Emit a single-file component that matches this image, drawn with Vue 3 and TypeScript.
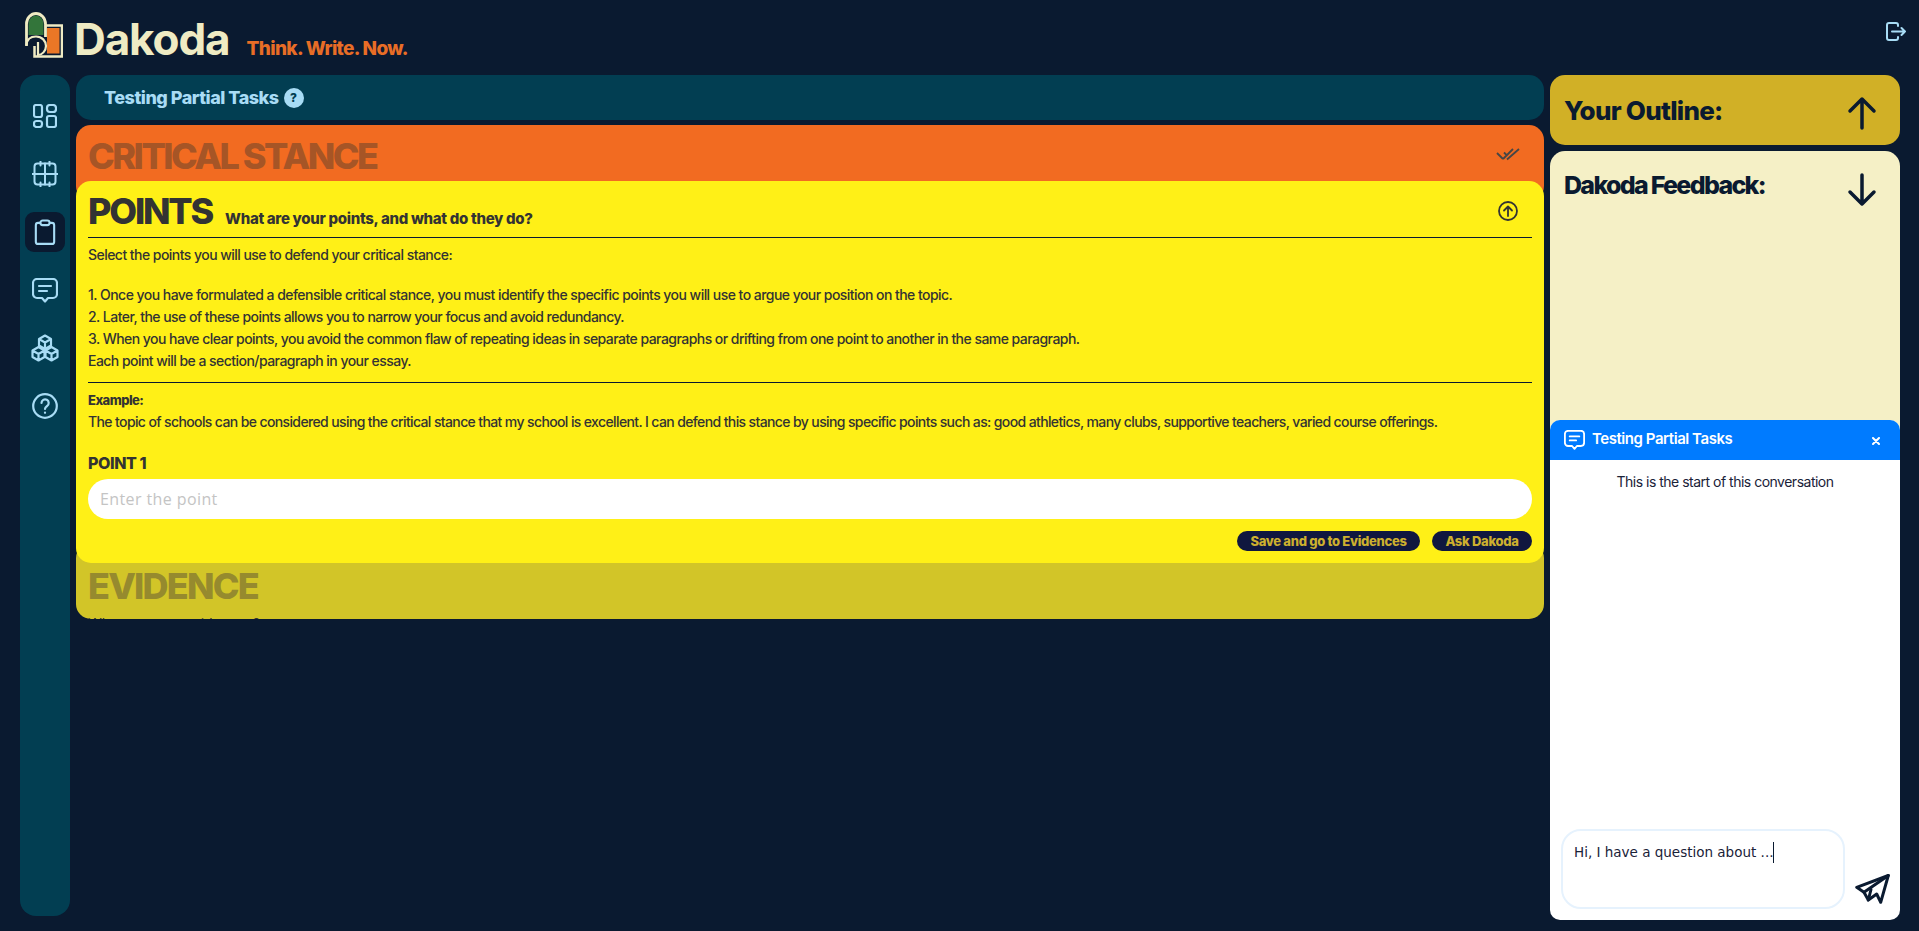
<script setup lang="ts">
const bodyLines: string[] = [
  '1. Once you have formulated a defensible critical stance, you must identify the specific points you will use to argue your position on the topic.',
  '2. Later, the use of these points allows you to narrow your focus and avoid redundancy.',
  '3. When you have clear points, you avoid the common flaw of repeating ideas in separate paragraphs or drifting from one point to another in the same paragraph.',
  'Each point will be a section/paragraph in your essay.',
]
</script>

<template>
  <div class="app">
    <header class="top">
      <div class="brand">
        <svg class="logo" viewBox="0 0 38 46" width="38" height="46" fill="none">
          <path d="M20 13.500H37V44.500H9.500V34" fill="#0a1a30" stroke="#efebc3" stroke-width="2.500"/>
          <rect x="22" y="16" width="12.500" height="25.500" fill="#ea7726"/>
          <path d="M1.500 34V12C1.500 6 6 1.500 11 1.500S20.500 6 20.500 12V25" fill="#0a1a30" stroke="#efebc3" stroke-width="2.800" stroke-linejoin="round"/>
          <path d="M3.500 23V12C3.500 7.500 7 3.500 11 3.500S18.500 7.500 18.500 12V23Z" fill="#33753a"/>
          <path d="M1.500 33C2 27 6 24.500 11 24.500C17 24.500 21 29 21 34C21 39 17 43 13 43V30" stroke="#efebc3" stroke-width="2.200"/>
        </svg>
        <span class="wordmark">Dakoda</span>
        <span class="tagline">Think. Write. Now.</span>
      </div>
      <svg class="logout" viewBox="0 0 20 19" width="20" height="19" fill="none" stroke="#a8dcf5" stroke-width="2" stroke-linecap="round" stroke-linejoin="round">
        <path d="M12 4V3a2 2 0 0 0-2-2H3a2 2 0 0 0-2 2v13a2 2 0 0 0 2 2h7a2 2 0 0 0 2-2v-1"/>
        <path d="M6 9.500h13M15.500 6l3.500 3.500-3.500 3.500"/>
      </svg>
    </header>

    <div class="body">
      <nav class="side">
        <a class="nav-item">
          <svg viewBox="0 0 24 24" width="24" height="24" fill="none" stroke="#a8dcf5" stroke-width="2.200">
            <rect x="1" y="1" width="8" height="12" rx="2"/>
            <rect x="14" y="1" width="9" height="7" rx="3"/>
            <rect x="14" y="12" width="9" height="11" rx="2"/>
            <rect x="1" y="17" width="8" height="6" rx="2.500"/>
          </svg>
        </a>
        <a class="nav-item">
          <svg viewBox="0 0 26 26" width="26" height="26" fill="none" stroke="#a8dcf5" stroke-width="2" stroke-linecap="round">
            <rect x="2.500" y="2.500" width="21" height="21" rx="3"/>
            <path d="M13 2.500v21M.5 13h25M8.500 .5v4M17.500 .5v4M8.500 21.500v4M17.500 21.500v4"/>
          </svg>
        </a>
        <a class="nav-item active">
          <svg viewBox="0 0 24 28" width="22" height="26" fill="none" stroke="#a8dcf5" stroke-width="2.300" stroke-linejoin="round">
            <path d="M7 4H4.500A2.500 2.500 0 0 0 2 6.500v18A2.500 2.500 0 0 0 4.500 27h15a2.500 2.500 0 0 0 2.500-2.500v-18A2.500 2.500 0 0 0 19.500 4H17"/>
            <rect x="7" y="1.500" width="10" height="5" rx="2.500"/>
          </svg>
        </a>
        <a class="nav-item">
          <svg viewBox="0 0 26 25" width="26" height="25" fill="none" stroke="#a8dcf5" stroke-width="2.200" stroke-linejoin="round" stroke-linecap="round">
            <path d="M5 1h16a4 4 0 0 1 4 4v11a4 4 0 0 1-4 4h-5l-3 3.500L10 20H5a4 4 0 0 1-4-4V5a4 4 0 0 1 4-4Z"/>
            <path d="M7 8h12M7 13h8"/>
          </svg>
        </a>
        <a class="nav-item">
          <svg viewBox="0 0 28 28" width="28" height="28" fill="none" stroke="#a8dcf5" stroke-width="2.200" stroke-linejoin="round">
            <path d="M14 1.500l6 3.500v6.500l-6 3.500-6-3.500V5Z M8 5l6 3.500L20 5M14 8.500V15"/>
            <path d="M7.500 13L13.500 16.500V23L7.500 26.500 1.500 23V16.500Z M1.500 16.500L7.500 20l6-3.500M7.500 20v6.500"/>
            <path d="M20.500 13l6 3.500V23l-6 3.500-6-3.500V16.500Z M14.500 16.500l6 3.500 6-3.500M20.500 20v6.500"/>
          </svg>
        </a>
        <a class="nav-item">
          <svg viewBox="0 0 26 26" width="26" height="26" fill="none" stroke="#a8dcf5" stroke-width="2.200" stroke-linecap="round">
            <circle cx="13" cy="13" r="11.800"/>
            <path d="M9.500 10a3.600 3.600 0 1 1 5.600 3c-1.300.9-2.100 1.600-2.100 3"/>
            <path d="M13 19.500v.3"/>
          </svg>
        </a>
      </nav>

      <main class="center">
        <div class="title-bar">
          <span class="title-text">Testing Partial Tasks</span>
          <span class="help">?</span>
        </div>

        <section class="stage stage-critical">
          <h2 class="stage-title">CRITICAL STANCE</h2>
          <svg class="checks" viewBox="0 0 24 13" width="24" height="13" fill="none" stroke="#464646" stroke-width="1.800">
            <path d="M1 5l6 6M7 11L17 1M8 4.500L11 7.500M11 11.500L23 1"/>
          </svg>
        </section>

        <section class="stage-open">
          <div class="open-head">
            <h2 class="open-title">POINTS</h2>
            <span class="open-sub">What are your points, and what do they do?</span>
            <svg class="up-circle" viewBox="0 0 20 20" width="20" height="20" fill="none" stroke="#333" stroke-width="1.800" stroke-linecap="round" stroke-linejoin="round">
              <circle cx="10" cy="10" r="9"/>
              <path d="M10 15V5.500M6 9.500l4-4 4 4"/>
            </svg>
          </div>
          <div class="copy">
            <p class="lead">Select the points you will use to defend your critical stance:</p>
            <p v-for="line in bodyLines" :key="line">{{ line }}</p>
          </div>
          <div class="example">
            <p class="example-label">Example:</p>
            <p class="example-text">The topic of schools can be considered using the critical stance that my school is excellent. I can defend this stance by using specific points such as: good athletics, many clubs, supportive teachers, varied course offerings.</p>
          </div>
          <label class="field-label" for="point1">POINT 1</label>
          <input id="point1" class="field" type="text" placeholder="Enter the point" />
          <div class="actions">
            <button class="pill" type="button">Save and go to Evidences</button>
            <button class="pill ask" type="button">Ask Dakoda</button>
          </div>
        </section>

        <section class="stage stage-evidence">
          <h2 class="stage-title">EVIDENCE</h2>
          <p class="clipped">What are your evidences?</p>
        </section>
      </main>

      <aside class="right">
        <div class="panel outline">
          <h2>Your Outline:</h2>
          <svg viewBox="0 0 30 34" width="30" height="34" fill="none" stroke="#0a1a30" stroke-width="3.500" stroke-linecap="round" stroke-linejoin="round">
            <path d="M15 32V3M3 15L15 3l12 12"/>
          </svg>
        </div>
        <div class="panel feedback">
          <h2>Dakoda Feedback:</h2>
          <svg viewBox="0 0 30 34" width="30" height="34" fill="none" stroke="#0a1a30" stroke-width="3.500" stroke-linecap="round" stroke-linejoin="round">
            <path d="M15 2v29M3 19l12 12 12-12"/>
          </svg>
        </div>

        <div class="chat">
          <div class="chat-head">
            <svg viewBox="0 0 26 25" width="21" height="20" fill="none" stroke="#fff" stroke-width="2.300" stroke-linejoin="round" stroke-linecap="round">
              <path d="M5 1h16a4 4 0 0 1 4 4v11a4 4 0 0 1-4 4h-5l-3 3.500L10 20H5a4 4 0 0 1-4-4V5a4 4 0 0 1 4-4Z"/>
              <path d="M7 8h12M7 13h8"/>
            </svg>
            <span class="chat-title">Testing Partial Tasks</span>
            <svg class="chat-x" viewBox="0 0 8 8" width="8" height="8" fill="none" stroke="#fff" stroke-width="2" stroke-linecap="round">
              <path d="M1 1l6 6M7 1L1 7"/>
            </svg>
          </div>
          <p class="chat-start">This is the start of this conversation</p>
          <div class="chat-input">
            <div class="chat-box"><span>Hi, I have a question about ...</span><i class="caret"></i></div>
            <svg class="send" viewBox="0 0 35 30" width="35" height="30" fill="none" stroke="#0a1a30" stroke-width="3" stroke-linejoin="round" stroke-linecap="round">
              <path d="M33.300 1.500L1.700 13.300 9 18.300 13.300 26 21.700 20 25.700 28.300Z"/>
              <path d="M33.300 1.500L9 18.300"/>
              <path d="M13.300 26L16 15.500"/>
            </svg>
          </div>
        </div>
      </aside>
    </div>
  </div>
</template>

<style>
html, body { margin: 0; background: #0a1a30; }
</style>

<style scoped>
.app {
  height: 931px;
  box-sizing: border-box;
  overflow: hidden;
  background: #0a1a30;
  font-family: Inter, "Liberation Sans", sans-serif;
  color: #333;
}
.top {
  height: 75px;
  display: flex;
  justify-content: space-between;
  align-items: flex-start;
  padding: 12px 13px 0 25px;
  box-sizing: border-box;
}
.brand { display: flex; align-items: flex-start; }
.logo { flex: none; }
.wordmark {
  margin-left: 11px;
  font-size: 44px;
  line-height: 54px;
  font-weight: 700;
  color: #efebc3;
  letter-spacing: -1.1px;
}
.tagline {
  margin-left: 17px;
  margin-top: 24px;
  font-size: 19px;
  line-height: 26px;
  font-weight: 800;
  color: #e86d26;
  letter-spacing: -0.65px;
}
.logout { margin-top: 10px; }
.body {
  height: 856px;
  display: flex;
  gap: 6px;
  padding: 0 19px 15px 20px;
  box-sizing: border-box;
  align-items: flex-start;
}
.side {
  width: 50px;
  height: 841px;
  flex: none;
  background: #023e52;
  border-radius: 16px;
  display: flex;
  flex-direction: column;
  align-items: center;
  gap: 18px;
  padding-top: 21px;
  box-sizing: border-box;
}
.nav-item {
  width: 40px;
  height: 40px;
  border-radius: 9px;
  display: flex;
  align-items: center;
  justify-content: center;
}
.nav-item.active { background: #0a1a30; }
.center { width: 1468px; flex: none; display: flex; flex-direction: column; }
.title-bar {
  height: 45px;
  margin-bottom: 5px;
  background: #023e52;
  border-radius: 15px;
  display: flex;
  align-items: center;
  padding-left: 28px;
  gap: 5px;
}
.title-text { font-size: 18px; font-weight: 800; color: #a8dcf5; letter-spacing: -0.5px; }
.help {
  width: 20px;
  height: 20px;
  border-radius: 50%;
  background: #a8dcf5;
  color: #023e52;
  font-size: 12px;
  font-weight: 800;
  display: flex;
  align-items: center;
  justify-content: center;
}
.stage {
  position: relative;
  display: flex;
  align-items: flex-start;
  justify-content: space-between;
  overflow: hidden;
  border-radius: 15px;
  padding: 0 12px;
}
.stage-title {
  margin: 0;
  font-size: 36px;
  line-height: 46px;
  font-weight: 800;
}
.stage-critical {
  height: 76px;
  margin-bottom: -20px;
  background: #f26b21;
}
.stage-critical .stage-title { color: #a65526; margin-top: 8px; letter-spacing: -2.5px; }
.checks { margin: 23px 12px 0 0; }
.stage-open {
  position: relative;
  z-index: 1;
  height: 382px;
  box-sizing: border-box;
  background: #fff017;
  border-radius: 15px;
  padding: 0 12px;
}
.open-head {
  height: 57px;
  box-sizing: border-box;
  display: flex;
  align-items: flex-end;
  border-bottom: 1px solid #0a1a30;
  padding-bottom: 7px;
}
.open-title {
  margin: 0 0 -2px;
  font-size: 36px;
  line-height: 42px;
  font-weight: 800;
  letter-spacing: -2.2px;
  color: #333;
}
.open-sub {
  margin: 0 0 1px 13px;
  font-size: 15px;
  line-height: 20px;
  font-weight: 800;
  letter-spacing: -0.3px;
}
.up-circle { margin: 0 14px 9px auto; }
.copy {
  height: 145px;
  box-sizing: border-box;
  padding-top: 6px;
  border-bottom: 1px solid #0a1a30;
}
p { margin: 0; }
.copy p, .example p {
  font-size: 14px;
  line-height: 22px;
  font-weight: 500;
  letter-spacing: -0.54px;
  white-space: nowrap;
}
.example .example-text { letter-spacing: -0.62px; }
.copy .lead { margin-bottom: 18px; }
.example { padding-top: 6px; }
.example .example-label { font-weight: 800; font-size: 13px; }
.field-label {
  display: block;
  margin-top: 18px;
  font-size: 16px;
  line-height: 24px;
  font-weight: 800;
  letter-spacing: -0.4px;
}
.field {
  display: block;
  margin-top: 4px;
  width: 100%;
  height: 40px;
  box-sizing: border-box;
  border: 0;
  outline: 0;
  border-radius: 20px;
  background: #fff;
  padding: 0 12px;
  font-family: "Open Sans", sans-serif;
  font-size: 16px;
  letter-spacing: 0.4px;
}
.field::placeholder { color: #c4c4c4; }
.actions {
  display: flex;
  justify-content: flex-end;
  gap: 12px;
  margin-top: 12px;
}
.pill {
  height: 20px;
  width: 183px;
  padding: 0;
  border: 0;
  border-radius: 10px;
  background: #10173f;
  color: #cdb02e;
  font-family: inherit;
  font-size: 13px;
  font-weight: 800;
  letter-spacing: -0.3px;
}
.pill.ask { width: 100px; }
.stage-evidence {
  height: 76px;
  margin-top: -20px;
  background: #d2c528;
  flex-wrap: wrap;
  align-content: flex-start;
}
.stage-evidence .stage-title { color: #968a2e; width: 100%; margin-top: 20px; letter-spacing: -1.8px; }
.clipped { font-size: 14px; line-height: 22px; color: #333; margin-top: 4px; }
.right {
  position: relative;
  width: 350px;
  height: 845px;
  flex: none;
}
.panel {
  border-radius: 15px;
  display: flex;
  justify-content: space-between;
  align-items: flex-start;
  padding: 0 14px;
  box-sizing: border-box;
  margin-bottom: 6px;
}
.panel h2 {
  margin: 0;
  font-size: 26px;
  font-weight: 800;
  color: #0a1a30;
}
.outline h2 { letter-spacing: -0.75px; }
.feedback h2 { font-size: 25px; letter-spacing: -1.7px; }
.outline { height: 70px; background: #d1b026; padding-top: 20px; }
.outline svg { margin: 1px 9px 0 0; }
.feedback { height: 400px; background: #f5f0c6; padding-top: 19px; }
.feedback svg { margin: 3px 9px 0 0; }
.chat {
  position: absolute;
  left: 0;
  right: 0;
  top: 345px;
  height: 500px;
  background: #fff;
  border-radius: 10px;
  overflow: hidden;
  display: flex;
  flex-direction: column;
}
.chat-head {
  height: 40px;
  flex: none;
  background: #007bff;
  display: flex;
  align-items: flex-start;
  padding: 10px 20px 0 14px;
  box-sizing: border-box;
  gap: 7px;
}
.chat-title {
  font-size: 15px;
  line-height: 17px;
  font-weight: 600;
  color: #fff;
  letter-spacing: -0.45px;
}
.chat-x { margin: 7px 0 0 auto; }
.chat-start {
  margin-top: 12px;
  text-align: center;
  font-size: 14px;
  line-height: 20px;
  color: #1a2238;
  letter-spacing: -0.5px;
}
.chat-input {
  margin-top: auto;
  display: flex;
  align-items: flex-end;
  gap: 10px;
  padding: 0 10px 11px 11px;
}
.chat-box {
  width: 284px;
  height: 80px;
  box-sizing: border-box;
  border: 2px solid #e6f2fd;
  border-radius: 20px;
  padding: 12px 11px;
  font-family: "DejaVu Sans", sans-serif;
  font-size: 13.500px;
  line-height: 18px;
  color: #1a2238;
  white-space: nowrap;
  display: flex;
  align-items: flex-start;
}
.caret {
  display: block;
  width: 1px;
  height: 21px;
  background: #0a1a30;
  margin: -1px 0 0 0;
}
.send { flex: none; margin-bottom: 5px; }
</style>
